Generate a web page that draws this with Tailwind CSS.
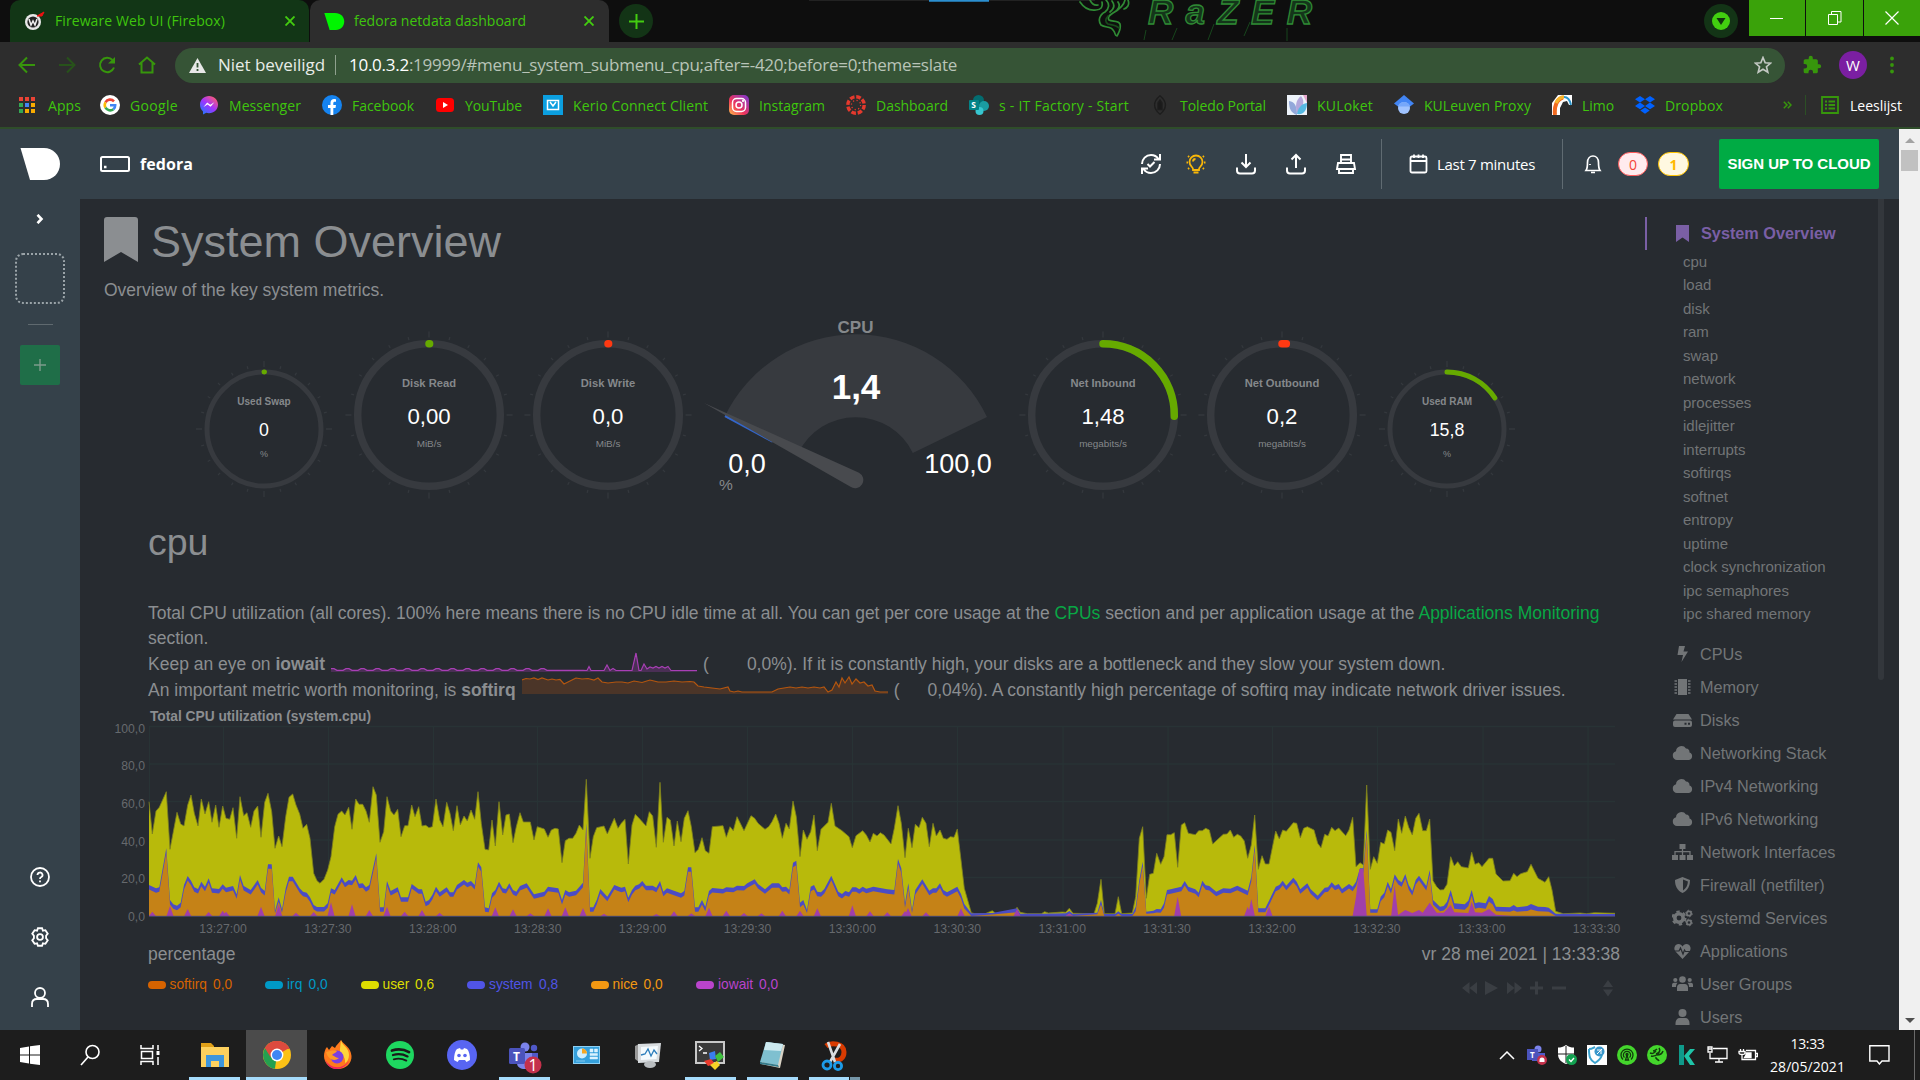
<!DOCTYPE html>
<html lang="nl">
<head>
<meta charset="utf-8">
<title>fedora netdata dashboard</title>
<script src="https://cdn.jsdelivr.net/npm/@tailwindcss/browser@4"></script>
</head>
<body class="w-[1920px] h-[1080px] overflow-hidden flex flex-col bg-[#272b30] font-['Liberation_Sans',Arial,sans-serif] text-[#8b8e91]">

<!-- Browser chrome -->
<div class="h-[129px] shrink-0 flex flex-col bg-[#2d2d2d] border-b-2 border-[#2f4d2a] font-['Open_Sans','Noto_Sans',sans-serif] text-[14px] text-[#3fc50d] whitespace-nowrap">
  <!-- Tab strip -->
  <div class="relative h-[42px] shrink-0 bg-[#0e0e0e] flex">
    <svg class="absolute left-0 top-0" width="1920" height="42" fill="none">
      <path d="M809 .5H1095" stroke="#222"/><path d="M929 .8h60" stroke="#2b8fd0" stroke-width="1.8"/>
      <g stroke="#2f8a34" stroke-width="1.7" stroke-linejoin="round" stroke-linecap="round">
        <path d="M1080 2c4 6 9 9 16 8 5 0 7-3 6-8M1090 0c2 4 4 6 8 5M1106 0c4 4 3 9-1 12-6 3-7 9-4 13 4 3 10 1 12 5 3 3 1 5 4 6 3-5 4-8 3-12-2-4-8-2-11-4-2-3 1-5 4-7 7-4 11-8 12-13M1112 1c3 4 2 8-2 11M1118 2c2 3 1 6-1 8M1124 9c3-1 6-4 4-9"/>
        <path d="M1108 16c-3 3-3 6 0 8 4 1 8 1 11 4" stroke="#174a1b"/>
      </g>
      <text x="1148" y="24" font-family="Liberation Sans" font-style="italic" font-weight="700" font-size="35" textLength="164" lengthAdjust="spacing" fill="#14351a" stroke="#2f8a34" stroke-width="1.3">RaZER</text>
      <path d="M1146 30l-2 10M1177 28l-5 12M1214 24l-6 16M1250 22l-6 14M1287 28v13" stroke="#17451c"/>
    </svg>
    <div class="relative ml-[10px] w-[299px] h-[42px] rounded-t-[10px] bg-[#123616] flex items-center pl-[14px]">
      <svg width="22" height="22" viewBox="0 0 22 22"><circle cx="9" cy="12" r="8" fill="#e8e8e8"/><circle cx="9" cy="12" r="5.6" fill="#222"/><path d="M5 9l2 6 2-4 2 4 2-6" stroke="#eee" stroke-width="1.5" fill="none"/><path d="M13 6l7-4-2 4z" fill="#e11" stroke="#e11"/></svg>
      <span class="ml-[9px] -mt-px" data-w="170">Fireware Web UI (Firebox)</span>
      <svg class="absolute left-[275px] top-[16px]" width="10" height="10"><path d="M.5.5l9 9m0-9l-9 9" stroke="#43cc10" stroke-width="1.9"/></svg>
    </div>
    <div class="relative ml-[1px] w-[299px] h-[42px] rounded-t-[10px] bg-[#2d2d2d] flex items-center pl-[14px]">
      <svg width="21" height="17" viewBox="0 0 42 35"><path d="M0 0h22C34 0 41 8 41 17.500S34 35 24 35H11z" fill="#00f500"/></svg>
      <span class="ml-[9px] -mt-px" data-w="172">fedora netdata dashboard</span>
      <svg class="absolute left-[274px] top-[16px]" width="10" height="10"><path d="M.5.5l9 9m0-9l-9 9" stroke="#43cc10" stroke-width="1.900"/></svg>
    </div>
    <div class="relative ml-[10px] mt-1 size-[34px] rounded-full bg-[#133416] flex items-center justify-center"><svg width="15" height="15"><path d="M7.500 0v15M0 7.500h15" stroke="#43cc10" stroke-width="2"/></svg></div>
    <div class="relative ml-auto mt-1 mr-[11px] size-[34px] rounded-full bg-[#133416] flex items-center justify-center"><svg width="18" height="18"><circle cx="9" cy="9" r="9" fill="#42cf10"/><path d="M4.500 6h9L9 13z" fill="#12340f"/></svg></div>
    <div class="relative h-9 w-[171px] flex gap-px">
      <div class="w-[56px] bg-[#3aa20a] flex items-center justify-center"><svg width="14" height="14"><path d="M0 7.500h13" stroke="#fff"/></svg></div>
      <div class="w-[57px] bg-[#3aa20a] flex items-center justify-center"><svg width="14" height="14" fill="none" stroke="#fff"><path d="M.5 3.500h9v10h-9zM3.500 3V.5h9.500v10.500H10"/></svg></div>
      <div class="w-[56px] bg-[#3aa20a] flex items-center justify-center"><svg width="14" height="14"><path d="M.5.5l13 13m0-13l-13 13" stroke="#fff" stroke-width="1.200"/></svg></div>
    </div>
  </div>
  <!-- Address row -->
  <div class="h-[46px] shrink-0 flex items-center pl-[17px] text-[#37960c]">
    <svg width="20" height="20" fill="none" stroke="currentColor" stroke-width="2"><path d="M18 10H3m7-7.500L2.500 10l7.500 7.500"/></svg>
    <svg class="ml-5 text-[#27521a]" width="20" height="20" fill="none" stroke="currentColor" stroke-width="2"><path d="M2 10h15m-7-7.500l7.500 7.500-7.500 7.500"/></svg>
    <svg class="ml-5" width="20" height="20" fill="none" stroke="currentColor" stroke-width="2"><path d="M17 12.500A7.200 7.200 0 1 1 15.500 5"/><path d="M11 8.500h7V2z" fill="currentColor" stroke="none"/></svg>
    <svg class="ml-5" width="20" height="20" fill="none" stroke="currentColor" stroke-width="2"><path d="M2 9.500L10 2.500l8 7M4.500 8v9.500h11V8"/></svg>
    <div class="ml-[18px] w-[1610px] h-[35px] rounded-full bg-[#365436] flex items-center text-[17px] text-[#b9c4b8]">
      <svg class="ml-[14px]" width="17" height="15"><path d="M8.500 0L17 15H0z" fill="#e8e8e8"/><path d="M8.500 5v4.500m0 1.500v2" stroke="#365436" stroke-width="1.800"/></svg>
      <span class="ml-3 text-[#e8ece8]" data-w="107">Niet beveiligd</span>
      <div class="ml-[10px] w-px h-5 bg-[#8fa18e]"></div>
      <span class="ml-[13px]" data-w="608"><span class="text-white">10.0.3.2</span>:19999/#menu_system_submenu_cpu;after=-420;before=0;theme=slate</span>
      <svg class="ml-auto mr-[13px]" width="18" height="18" viewBox="0 0 24 24" fill="none" stroke="#c4c9c4" stroke-width="2.200"><path d="M12 2l2.900 7 7.300.5-5.600 4.800 1.800 7.200L12 17.600l-6.400 3.900 1.800-7.200L1.800 9.500 9.100 9z"/></svg>
    </div>
    <svg class="ml-[17px]" width="20" height="20" viewBox="0 0 24 24" fill="currentColor"><path d="M20.500 11H19V7a2 2 0 0 0-2-2h-4V3.500a2.500 2.500 0 0 0-5 0V5H4a2 2 0 0 0-2 2v3.800h1.500a2.700 2.700 0 0 1 0 5.400H2V20a2 2 0 0 0 2 2h3.800v-1.500a2.700 2.700 0 0 1 5.400 0V22H17a2 2 0 0 0 2-2v-4h1.500a2.500 2.500 0 0 0 0-5z"/></svg>
    <div class="ml-[17px] size-7 rounded-full bg-[#7b1fa2] text-white text-[15px] flex items-center justify-center">W</div>
    <svg class="ml-[23px]" width="4" height="18" fill="currentColor"><circle cx="2" cy="2.500" r="1.900"/><circle cx="2" cy="9" r="1.900"/><circle cx="2" cy="15.500" r="1.900"/></svg>
  </div>
  <!-- Bookmarks -->
  <div class="h-[34px] shrink-0 flex items-center pl-[18px] gap-[21px]">
    <div class="flex items-center gap-[10px] -mr-[2px]"><svg width="20" height="20"><g><path d="M1 2h4v4H1zM7 2h4v4H7zM13 2h4v4h-4z" fill="#ea4335"/><path d="M1 8h4v4H1z" fill="#34a853"/><path d="M7 8h4v4H7z" fill="#4285f4"/><path d="M13 8h4v4h-4zM7 14h4v4H7zM13 14h4v4h-4z" fill="#f9ab00"/><path d="M1 14h4v4H1z" fill="#34a853"/></g></svg><span data-w="33">Apps</span></div>
    <div class="flex items-center gap-[10px]"><svg width="20" height="20" fill="none" stroke-width="2.600"><circle cx="10" cy="10" r="10" fill="#fff"/><path d="M14 6.300A5.300 5.300 0 0 0 5.500 7.300" stroke="#ea4335"/><path d="M5.500 7.300a5.300 5.300 0 0 0 0 5.400" stroke="#fbbc05"/><path d="M5.500 12.700a5.300 5.300 0 0 0 7.900 1.500" stroke="#34a853"/><path d="M13.400 14.200A5 5 0 0 0 15.200 10.200H10" stroke="#4285f4"/></svg><span data-w="48">Google</span></div>
    <div class="flex items-center gap-[10px]"><svg width="20" height="20"><defs><linearGradient id="ms" x1="0" y1="1" x2=".8" y2="0"><stop stop-color="#0a84ff"/><stop offset=".55" stop-color="#a033ff"/><stop offset="1" stop-color="#ff5c70"/></linearGradient></defs><path d="M10 1c5 0 9 3.700 9 8.600s-4 8.600-9 8.600c-1 0-1.900-.1-2.700-.4L4 19.500V16.500C2 14.900 1 12.400 1 9.600 1 4.700 5 1 10 1z" fill="url(#ms)"/><path d="M4.500 12l3.700-4.500 3 2.200 4.200-2.500-3.800 4.600-3-2.200z" fill="#fff"/></svg><span data-w="72">Messenger</span></div>
    <div class="flex items-center gap-[10px]"><svg width="20" height="20"><circle cx="10" cy="10" r="10" fill="#1583f0"/><path d="M8.500 20v-7H6v-3h2.500V7.800C8.500 5.300 10 4 12.200 4l1.800.2v2.500h-1.200c-1.200 0-1.500.7-1.500 1.500V10H14l-.5 3h-2.200v7z" fill="#fff"/></svg><span data-w="62">Facebook</span></div>
    <div class="flex items-center gap-[10px]"><svg width="20" height="20"><rect x="1" y="3" width="18" height="14" rx="3.500" fill="#f00"/><path d="M8 7l5 3-5 3z" fill="#fff"/></svg><span data-w="57">YouTube</span></div>
    <div class="flex items-center gap-[10px]"><svg width="20" height="20" fill="none"><path d="M0 0h20v20H0z" fill="#0b9fe0"/><path d="M4.500 5.500h11v9h-11zM7 7l3 4 3-4" stroke="#fff" stroke-width="1.500"/></svg><span data-w="135">Kerio Connect Client</span></div>
    <div class="flex items-center gap-[10px]"><svg width="20" height="20" fill="none" stroke="#fff" stroke-width="1.500"><defs><linearGradient id="ig" x1="0" y1="1" x2="1" y2="0"><stop stop-color="#fdc04c"/><stop offset=".4" stop-color="#f0355a"/><stop offset="1" stop-color="#7a38d8"/></linearGradient></defs><rect width="20" height="20" rx="5" fill="url(#ig)" stroke="none"/><rect x="3.500" y="3.500" width="13" height="13" rx="4"/><circle cx="10" cy="10" r="3"/><circle cx="14" cy="6" r=".4"/></svg><span data-w="66">Instagram</span></div>
    <div class="flex items-center gap-[10px]"><svg width="20" height="20" fill="none" stroke="#e4392d"><circle cx="10" cy="10" r="8.200" stroke-width="3.400" stroke-dasharray="4.640 1.800"/><circle cx="10" cy="10" r="4.600" stroke-width="1.300" stroke-dasharray="1.200 2.410"/></svg><span data-w="72">Dashboard</span></div>
    <div class="flex items-center gap-[10px]"><svg width="20" height="20"><circle cx="9.500" cy="5.500" r="5.500" fill="#036c70"/><circle cx="15" cy="11" r="5" fill="#1a9ba1"/><circle cx="10.500" cy="16" r="4" fill="#37c6d0"/><rect y="5" width="10" height="10" rx="1" fill="#038387"/><text x="2.300" y="13" font-size="8.500" font-weight="700" fill="#fff">S</text></svg><span data-w="130">s - IT Factory - Start</span></div>
    <div class="flex items-center gap-[10px]"><svg width="20" height="20" fill="none" stroke="#1d1d1d" stroke-width="1.400"><path d="M10 .7C6 4 4.600 7 4.600 10S6 16 10 19.300C14 16 15.400 13 15.400 10S14 4 10 .7z"/><path d="M8 14.500V8l2-3 2 3v6.500z" fill="#1a1a1a"/></svg><span data-w="86">Toledo Portal</span></div>
    <div class="flex items-center gap-[10px]"><svg width="20" height="20"><path d="M0 0h20v20H0z" fill="#edf3fa"/><path d="M2 6c6 1 8 5 8 14C4 18 2 14 2 6z" fill="#93a8da"/><path d="M14 1c4 5 3 11-4 17C8 10 9 5 14 1z" fill="#b3a7db"/><path d="M20 8c-6 1-9 5-10 11 6 1 10-3 10-11z" fill="#55b9e2"/><path d="M16 0h4v8z" fill="#e6a8cd"/></svg><span data-w="56">KULoket</span></div>
    <div class="flex items-center gap-[10px]"><svg width="20" height="20"><path d="M10 0l10 8.500-4 3H4l-4-3z" fill="#4285f4"/><circle cx="10" cy="13" r="6" fill="#a0c3ff"/><path d="M4 11.500C5 5.500 15 5.500 16 11.500z" fill="#76a7fa"/></svg><span data-w="107">KULeuven Proxy</span></div>
    <div class="flex items-center gap-[10px]"><svg width="20" height="20" fill="none"><path d="M0 20V8L6 0h14v10h-3l-2-4-4 1-3 6v7z" fill="#fff"/><path d="M3 20C2 11 5 4 11 2.500" stroke="#f26a1f" stroke-width="4"/><path d="M4 8c2-4 4-6 8-6" stroke="#f6b32b" stroke-width="3.500"/><path d="M12 2c4 0 6 3 7 8" stroke="#2a93c9" stroke-width="2"/></svg><span data-w="32">Limo</span></div>
    <div class="flex items-center gap-[10px]"><svg width="20" height="20" fill="#0061fe"><path d="M5 1l5 3.300-5 3.300L0 4.300zM15 1l5 3.300-5 3.300-5-3.300zM5 7.600l5 3.300-5 3.300-5-3.300zM15 7.600l5 3.300-5 3.300-5-3.300zM10 12.400l4.700 3.100L10 18.700l-4.700-3.200z"/></svg><span data-w="58">Dropbox</span></div>
    <div class="ml-auto flex items-center pr-[18px]">
      <svg width="9" height="8" fill="none" stroke="#37960c" stroke-width="1.500"><path d="M.8.8L4 4 .8 7.200M4.800.8L8 4 4.800 7.200"/></svg>
      <div class="ml-[13px] w-px h-5 bg-[#2c4f25]"></div>
      <svg class="ml-[15px]" width="18" height="18" fill="none" stroke="#37960c" stroke-width="1.800"><path d="M1 1h16v16H1zM4 5.500h2M7.500 5.500H14M4 9h2M7.500 9H14M4 12.500h2M7.500 12.500H14"/></svg>
      <span class="ml-[11px] text-white" data-w="52">Leeslijst</span>
    </div>
  </div>
</div>

<!-- Page -->
<div class="h-[901px] shrink-0 flex overflow-hidden">
  <!-- Left rail -->
  <div class="w-20 shrink-0 bg-[#35414a] flex flex-col items-center">
    <svg class="mt-[19px]" width="40" height="32" viewBox="0 0 40 32"><path d="M.5 0H24c9 0 16 7 16 16s-7 16-16 16H10z" fill="#fff"/></svg>
    <svg class="mt-[34px]" width="8" height="10" fill="none" stroke="#fff" stroke-width="2.600"><path d="M1.500.8L5.500 5 1.500 9.200"/></svg>
    <div class="mt-[29px] w-[50px] h-[51px] rounded-lg border-2 border-dotted border-[#9aa3a8]"></div>
    <div class="mt-5 w-[25px] h-px bg-[#5f696f]"></div>
    <div class="mt-5 size-10 rounded-[2px] bg-[#1f6e48] flex items-center justify-center"><svg width="12" height="12"><path d="M6 0v12M0 6h12" stroke="#7d9c8c" stroke-width="1.400"/></svg></div>
    <svg class="mt-[482px]" width="20" height="20" fill="none" stroke="#fff" stroke-width="1.800"><circle cx="10" cy="10" r="9"/><path d="M7.500 8a2.500 2.500 0 1 1 3.500 2.300c-.8.4-1 .8-1 1.700m0 1.500v1.800"/></svg>
    <svg class="mt-[40px]" width="20" height="20" viewBox="0 0 24 24" fill="none" stroke="#fff" stroke-width="2.200"><path d="M9.500 1.500h5l1 3 3-.7 2.800 4.200-2 2.500v3l2 2.500-2.800 4.200-3-.7-1 3h-5l-1-3-3 .7L2.700 16l2-2.500v-3l-2-2.500 2.800-4.200 3 .7z"/><circle cx="12" cy="12" r="3.500"/></svg>
    <svg class="mt-[40px]" width="20" height="20" fill="none" stroke="#fff" stroke-width="1.800"><circle cx="10" cy="6" r="5"/><path d="M2 20v-3c0-3 2-5 5-5h6c3 0 5 2 5 5v3"/></svg>
  </div>

  <div class="w-[1819px] shrink-0 flex flex-col">
    <!-- Top bar -->
    <header class="h-[70px] shrink-0 bg-[#35414a] flex items-center pl-5 pr-5 whitespace-nowrap font-['Open_Sans','Noto_Sans',sans-serif] text-white">
      <svg width="30" height="16" fill="none" stroke="#fff" stroke-width="2"><rect x="1" y="1" width="28" height="14" rx="1.500"/><path d="M4 11h2.500" stroke-width="2.500"/></svg>
      <span class="ml-[10px] text-[16px] font-bold" data-w="53">fedora</span>
      <svg class="ml-auto" width="24" height="24" fill="none" stroke="#fff" stroke-width="2"><path d="M3 12c0-5 4-9 9-9 3 0 5.500 1 7.500 4M21 2v5.500h-6M21 12c0 5-4 9-9 9-3 0-5.500-1-7.500-4M3 22v-5.500h6M8.500 12l2.500 2.500L15.500 10"/></svg>
      <svg class="ml-[21px]" width="24" height="24" fill="none" stroke="#f9b708" stroke-width="1.800"><path d="M9 17c0-2-3.500-3-3.500-7a6.500 6.500 0 0 1 13 0c0 4-3.500 5-3.500 7v1H9zM9.500 20.500h5M9 9.500C9 8 10 7 11.500 7M2.500 10.500h1.500M20 10.500h1.500M4 4l1.200 1M20 4l-1.200 1M4 17l1.200-1M20 17l-1.200-1"/></svg>
      <svg class="ml-[26px]" width="24" height="24" fill="none" stroke="#fff" stroke-width="2"><path d="M12 2v13M7.500 10.500L12 15l4.500-4.500M3 15.500v3c0 2 1 3 3 3h12c2 0 3-1 3-3v-3"/></svg>
      <svg class="ml-[26px]" width="24" height="24" fill="none" stroke="#fff" stroke-width="2"><path d="M12 16V3M7.500 7.500L12 3l4.500 4.500M3 15.500v3c0 2 1 3 3 3h12c2 0 3-1 3-3v-3"/></svg>
      <svg class="ml-[26px]" width="24" height="24" fill="none" stroke="#fff" stroke-width="1.900"><path d="M7 11V3h10v8M4 11h16l1 6H3zM5 17v4h14v-4M7 7.500h10"/></svg>
      <div class="ml-[23px] w-px h-[50px] bg-[#606b72]"></div>
      <svg class="ml-[24px]" width="24" height="24" fill="none" stroke="#fff" stroke-width="1.800"><rect x="4.500" y="4.500" width="16" height="16" rx="1.500"/><path d="M4.500 9h16M8 2.500v3.500M12.500 2.500v3.500M17 2.500v3.500"/></svg>
      <span class="ml-[7px] text-[15px]" data-w="98">Last 7 minutes</span>
      <div class="ml-[27px] w-px h-[50px] bg-[#606b72]"></div>
      <svg class="ml-[18px]" width="24" height="24" fill="none" stroke="#fff" stroke-width="1.700"><path d="M5 18.500h14c-1-1.500-1.500-3-1.500-8C17.500 6.500 15 4 12 4s-5.500 2.500-5.500 6.500c0 5-.5 6.500-1.500 8zM10 20.500h4M9 13v-1"/></svg>
      <div class="ml-[13px] w-[30px] h-6 rounded-full border-[1.500px] border-[#ff5b5b] bg-[#ffebee] text-[#f44336] text-[14px] flex items-center justify-center">0</div>
      <div class="ml-[10px] w-[31px] h-6 rounded-full border-[1.500px] border-[#ffc300] bg-[#fff8e1] text-[#ffb800] text-[14px] font-bold flex items-center justify-center">1</div>
      <div class="ml-[30px] w-[160px] h-[50px] rounded-[2px] bg-[#00ab44] flex items-center justify-center font-['Liberation_Sans',Arial,sans-serif] font-bold text-[15px]"><span data-w="143">SIGN UP TO CLOUD</span></div>
    </header>

    <div class="h-[831px] flex">
      <!-- Charts -->
      <main class="w-[1560px] shrink-0 whitespace-nowrap">
        <h1 class="mt-[18px] ml-6 h-[49px] flex items-center text-[45px] leading-[49px]">
          <svg class="-mt-1" width="34" height="45" viewBox="0 0 34 45"><path d="M3 0h28a3 3 0 0 1 3 3v42L17 35 0 45V3a3 3 0 0 1 3-3z" fill="#8b8e91"/></svg>
          <span class="ml-[13px]">System Overview</span>
        </h1>
        <p class="mt-[12px] ml-6 h-[25px] leading-[25px] text-[17.500px]">Overview of the key system metrics.</p>
        <div id="gauges" class="mt-[15px] ml-[112px] h-[183px] flex items-end gap-[7px]"></div>
        <h2 class="mt-[21px] ml-[68px] h-10 leading-10 text-[37.500px]">cpu</h2>
        <div class="mt-[39px] ml-[68px] h-[106px] text-[17.500px] leading-[25px]">
          <div class="h-[25px]">Total CPU utilization (all cores). 100% here means there is no CPU idle time at all. You can get per core usage at the <span class="text-[#09a745]">CPUs</span> section and per application usage at the <span class="text-[#09a745]">Applications Monitoring</span></div>
          <div class="h-[26px]">section.</div>
          <div class="h-[26px] flex"><span>Keep an eye on <b>iowait</b></span><svg id="spark-iowait" class="ml-[6px] shrink-0" width="366" height="22"></svg><span class="ml-[6px]">(</span><span class="ml-[38px]">0,0%). If it is constantly high, your disks are a bottleneck and they slow your system down.</span></div>
          <div class="h-[26px] flex"><span>An important metric worth monitoring, is <b>softirq</b></span><svg id="spark-softirq" class="ml-[6px] -mt-1 shrink-0" width="366" height="22"></svg><span class="ml-[6px]">(</span><span class="ml-[28px]">0,04%). A constantly high percentage of softirq may indicate network driver issues.</span></div>
        </div>
        <svg id="chart" class="-mt-px block" width="1560" height="236" viewBox="80 706 1560 236"></svg>
        <div class="h-6 pl-[68px] pr-5 flex justify-between text-[17.500px] leading-6"><span>percentage</span><span>vr 28 mei 2021 | 13:33:38</span></div>
        <div class="mt-[8px] h-[22px] pl-[68px] flex items-center text-[13.750px]" id="legend"></div>
        <svg class="-mt-[17px] ml-[1375px]" width="170" height="18" fill="#3a3e43"><path d="M14.500 3v12L7 9zM22 3v12l-7.500-6zM30 2l13 7-13 7zM52 3v12l7.500-6zM59.500 3v12L67 9z"/><path d="M75 9h13M81.500 2.500v13M97 9h14" stroke="#3a3e43" stroke-width="3"/><path d="M148 8l5-7 5 7zM148 10.500l5 7 5-7z"/></svg>
      </main>
      <!-- Section menu -->
      <nav class="relative w-[259px] shrink-0 pt-[18px] text-[#727577]">
        <div class="absolute left-[238px] top-0 w-[6px] h-[481px] rounded-b bg-[#33373c]"></div>
        <div class="ml-[5px] h-[33px] border-l-2 border-[#7a5fa5] flex items-center text-[#7a5fa5] text-[16.250px] font-bold whitespace-nowrap">
          <svg class="ml-[29px]" width="13" height="17"><path d="M0 0h13v17l-6.500-4.500L0 17z" fill="currentColor"/></svg><span class="ml-3">System Overview</span>
        </div>
        <div id="sub" class="ml-[43px] text-[15px] leading-[23.470px]"></div>
        <div id="menu" class="mt-[12px] ml-[32px] text-[16.250px] leading-[33px]"></div>
      </nav>
    </div>
  </div>

  <!-- Browser scrollbar -->
  <div class="w-[21px] shrink-0 bg-[#f0f0f0] flex flex-col items-center">
    <svg class="mt-[9px]" width="10" height="5"><path d="M0 5l5-5 5 5z" fill="#a3a3a3"/></svg>
    <div class="mt-[7px] w-[17px] h-[21px] bg-[#c1c1c1]"></div>
    <svg class="mt-auto mb-[7px]" width="10" height="5"><path d="M0 0l5 5 5-5z" fill="#505050"/></svg>
  </div>
</div>

<!-- Taskbar -->
<div class="h-[50px] shrink-0 bg-[#1d1d1d] flex items-stretch font-['Open_Sans','Noto_Sans',sans-serif] text-white">
  <div class="w-[60px] grid place-items-center"><svg width="20" height="20" fill="#fff"><path d="M0 3l9-1.500v8H0zM10 1.300L20 0v9.500H10zM0 10.500h9v8L0 17zM10 10.500h10V20l-10-1.300z"/></svg></div>
  <div class="w-[60px] grid place-items-center"><svg width="22" height="22" fill="none" stroke="#fff" stroke-width="1.600"><circle cx="13.500" cy="8" r="6.500"/><path d="M9 13l-7 8"/></svg></div>
  <div class="w-[63px] pr-[3px] grid place-items-center"><svg width="22" height="20" fill="none" stroke="#fff" stroke-width="1.500"><path d="M2 0v3.500h12V0M2 20v-3.500h12V20M2.500 6.500h11v7h-11zM19 0v5M19 12v8"/><path d="M17.500 6h3v4h-3z" fill="#fff" stroke="none"/></svg></div>
  <div class="w-[63px] flex flex-col items-center justify-end gap-[10px]"><svg width="28" height="24"><path d="M0 0h10l3 3v4H0z" fill="#e0a018"/><path d="M0 4h28v20H0z" fill="#fdd15e"/><path d="M5 24V12h18v12h-5v-6h-8v6z" fill="#3e96dc"/></svg><div class="w-[51px] h-[3px] bg-[#a5dbfb]"></div></div>
  <div class="w-[61px] flex flex-col items-center justify-end gap-[8px] bg-[#4b4b4b]"><svg width="28" height="28"><circle cx="14" cy="14" r="14" fill="#fbc116"/><path d="M14 14L2 7A14 14 0 0 1 26.200 7z" fill="#dd4b3e"/><path d="M14 14L1.900 7a14 14 0 0 0 10 20.800z" fill="#24a050"/><path d="M14 8h12.700a14 14 0 0 0-24.800-1l5.500 9z" fill="#dd4b3e"/><circle cx="14" cy="14" r="6.400" fill="#fff"/><circle cx="14" cy="14" r="5" fill="#3f86f4"/></svg><div class="w-[61px] h-[3px] bg-[#a5dbfb]"></div></div>
  <div class="w-[62px] grid place-items-center"><svg width="30" height="30"><path d="M15 29C7 29 1 23 1 16c0-3 1-7 3-9l2 3 3-4 3 2C13 5 17 2 18 0c2 4 10 7 10.500 16C29 23 23 29 15 29z" fill="#ff7a1c"/><path d="M18 0c1 6 8 7 8 15 0 4-2 7-4 8 1-8-6-8-5-14z" fill="#ffd43a"/><circle cx="14" cy="17" r="6.500" fill="#7b3fe0"/><path d="M3 12c2 8 9 10 13 6-3 0-4-2-7-3 2-2 4-2 5-4-4-1-7 0-11 1z" fill="#ff9a25"/><path d="M2 19c4 9 16 12 24 2-4 9-20 13-24-2z" fill="#f0245e"/></svg></div>
  <div class="w-[62px] grid place-items-center"><svg width="28" height="28" fill="none" stroke="#1a1a1a" stroke-linecap="round"><circle cx="14" cy="14" r="14" fill="#1ed760" stroke="none"/><path d="M6 9.500c6-1.800 12-1.200 17 1.600" stroke-width="2.800"/><path d="M7 14c5-1.500 10-1 14.500 1.400" stroke-width="2.300"/><path d="M7.800 18.300c4-1.200 8.500-.8 12.500 1.300" stroke-width="1.900"/></svg></div>
  <div class="w-[62px] grid place-items-center"><svg width="30" height="30"><circle cx="15" cy="15" r="15" fill="#5865f2"/><path d="M7 20c0-5 1-9 3-11l3-1 .8 1.500h2.400L17 8l3 1c2 2 3 6 3 11l-3.500 2-1.500-2h-6l-1.500 2z" fill="#fff"/><circle cx="12" cy="15.500" r="1.800" fill="#5865f2"/><circle cx="18" cy="15.500" r="1.800" fill="#5865f2"/></svg></div>
  <div class="w-[62px] flex flex-col items-center justify-end gap-[4px]"><svg class="overflow-visible" width="30" height="31"><circle cx="16" cy="5" r="4.500" fill="#7b83eb"/><circle cx="25" cy="6" r="3.200" fill="#5059c9"/><path d="M20 11h9v9c0 4-9 4-9 0z" fill="#5059c9"/><path d="M8 11h15v10c0 8-15 8-15 0z" fill="#7b83eb"/><rect x="0" y="6" width="16" height="16" rx="1.500" fill="#4b53bc"/><text x="4" y="18.500" font-size="12" font-weight="700" fill="#fff">T</text><circle cx="24" cy="23" r="8.500" fill="#c4314b"/><text x="19.500" y="29" font-size="16" fill="#fff">1</text></svg><div class="w-[51px] h-[3px] bg-[#a5dbfb]"></div></div>
  <div class="w-[62px] grid place-items-center"><svg width="27" height="20"><path d="M0 1h27v18H0z" fill="#8ed0f3"/><path d="M1 2h25v16H1z" fill="#35a0dc"/><circle cx="9" cy="8.500" r="5" fill="#cfeeff"/><path d="M9 8.500V3.500a5 5 0 0 1 5 5z" fill="#f5a623"/><path d="M17 4h3v3h-3zM21.500 4h3v3h-3zM17 8.500h7.500v2H17zM17 12h7.500v2H17zM3 16h9" fill="#d9f2ff" stroke="#d9f2ff" stroke-width=".5"/></svg></div>
  <div class="w-[62px] grid place-items-center"><svg width="28" height="28"><path d="M1 5l4-2v18l-4-3z" fill="#999"/><path d="M4 3l23-1-2 19-21 1z" fill="#d8dcdf"/><path d="M7 6l17-1-1.500 13L7 19z" fill="#f4fafd"/><path d="M7 14l4-1 3-5 3 7 3-6 3 4" stroke="#2b7dbb" stroke-width="1.300" fill="none"/><ellipse cx="16" cy="23.500" rx="6" ry="3.500" fill="#b9bdc0"/></svg></div>
  <div class="w-[62px] flex flex-col items-center justify-end gap-[6px]"><svg width="30" height="30"><path d="M1 1h28v21H1z" fill="#3a3a3a" stroke="#c8c8c8" stroke-width="2"/><path d="M4 5l3 2.500-3 2.500M8 12h4" stroke="#fff" stroke-width="1.300" fill="none"/><path d="M14 12l6-2 1 8-6 1z" fill="#3a7ff0"/><path d="M20 15l5-4 4 5-6 5z" fill="#3fc13f"/><path d="M9 20l7-2 4 5-7 2z" fill="#ea3a2c"/><path d="M15 24l7-4 3 4-5 5z" fill="#f5d327"/></svg><div class="w-[51px] h-[3px] bg-[#a5dbfb]"></div></div>
  <div class="w-[62px] flex flex-col items-center justify-end gap-[8px]"><svg width="28" height="28"><path d="M9 1l18 3-5 23-19-4z" fill="#d9d3c5"/><path d="M8 1l17 2-5 21-18-3z" fill="#7fc0d0"/><path d="M8 1l17 2-2 7-17-1z" fill="#cdeaf0"/><path d="M2 21l18 3 1 2-19-3z" fill="#337b8c"/></svg><div class="w-[51px] h-[3px] bg-[#a5dbfb]"></div></div>
  <div class="w-[62px] flex flex-col items-center justify-end gap-[6px]"><svg width="28" height="30" fill="none"><path d="M6 5c5-4 18-3 18 6 0 7-5 9-10 8" stroke="#d83b01" stroke-width="5"/><path d="M8 1l7 20M20 3L10 21" stroke="#d9dde0" stroke-width="2.600"/><circle cx="7" cy="24" r="4" stroke="#1d9be8" stroke-width="2.800"/><circle cx="18" cy="25" r="3.600" stroke="#1d9be8" stroke-width="2.800"/></svg><div class="flex"><div class="w-[40px] h-[3px] bg-[#a5dbfb]"></div><div class="ml-px w-[10px] h-[3px] bg-[#7596a8]"></div></div></div>
  <div class="ml-auto flex items-center">
    <div class="w-[30px] grid place-items-center"><svg width="16" height="9" fill="none" stroke="#fff" stroke-width="1.500"><path d="M1 8l7-7 7 7"/></svg></div>
    <div class="w-[30px] grid place-items-center"><svg width="20" height="20"><circle cx="11" cy="4" r="3.500" fill="#7b83eb"/><path d="M5 8h13v8H5z" fill="#5059c9"/><rect y="4" width="11" height="11" fill="#4b53bc"/><text x="3" y="12.500" font-size="8" font-weight="700" fill="#fff">T</text><circle cx="15" cy="15" r="5" fill="#c4314b"/><path d="M12.500 15a2.500 2.500 0 1 1 5 0v2h-5z" fill="#fff"/></svg></div>
    <div class="w-[30px] grid place-items-center"><svg width="20" height="20"><path d="M9 0c3 2 5 2.500 8 2.500V9c0 5-3 8-8 10-5-2-8-5-8-10V2.500C4 2.500 6 2 9 0z" fill="#fff"/><path d="M9 1v17M1 9h16" stroke="#1d1d1d"/><circle cx="14.500" cy="14.500" r="5.500" fill="#12a150"/><path d="M12 14.500l2 2 3-3.500" stroke="#fff" stroke-width="1.300" fill="none"/></svg></div>
    <div class="w-[30px] grid place-items-center"><svg width="20" height="20" fill="none"><path d="M0 0h20v20H0z" fill="#fff"/><path d="M2 4c3 0 4-1 6-2M2 4c0 8 1 11 6 14 5-3 6-5 7-8" stroke="#3ba3cf" stroke-width="2"/><circle cx="12.500" cy="6.500" r="5" fill="#3a97cb"/><path d="M10 9l5-5M10 5h4v4" stroke="#fff"/></svg></div>
    <div class="w-[30px] grid place-items-center"><svg width="20" height="20" fill="none" stroke="#123a0d" stroke-width="1.300"><circle cx="10" cy="10" r="10" fill="#44d62c" stroke="none"/><path d="M6 14.500a6 6 0 1 1 8 0M7.500 12.500a3.600 3.600 0 1 1 5 0M8.500 15l1.500-5 1.500 5z"/><circle cx="10" cy="9.500" r="1"/></svg></div>
    <div class="w-[30px] grid place-items-center"><svg width="20" height="20" fill="none" stroke="#123a0d" stroke-width="1.500"><circle cx="10" cy="10" r="10" fill="#44d62c" stroke="none"/><path d="M3 8c3 1 4 0 6-2M4 11c4 1 6-1 8-3M9 12c-1 2 2 2 3 4M12 3c2 3 0 5-3 6M10 10c3 0 5-1 6-4M6 6c2 0 3-1 4-2"/></svg></div>
    <div class="w-[30px] grid place-items-center"><svg width="18" height="20"><path d="M1 0h5v20H1z" fill="#0f9a8a"/><path d="M6 11L12 4h5l-6 7 6 9h-5z" fill="#1fc4a8"/></svg></div>
    <div class="w-[30px] grid place-items-center"><svg width="21" height="18" fill="none" stroke="#fff" stroke-width="1.300"><path d="M6 2.500h14v10H3V7M8 16h8M12 12.500V16M1 1h4v5H1zM1 3h4"/></svg></div>
    <div class="w-[31px] grid place-items-center"><svg width="20" height="14" fill="none" stroke="#fff" stroke-width="1.300"><path d="M8 2.500h9.500v9H4V8M18 5.500h1.500v3H18M1 3.500h6V5c0 2-6 2-6 0zM2.500 1v2M5.500 1v2M4 7v3"/><path d="M8 5h5v4.500H6.500L8 7z" fill="#fff"/></svg></div>
    <div class="w-[89px] flex flex-col items-center text-[14px] leading-[23px]"><span data-w="34">13:33</span><span data-w="75">28/05/2021</span></div>
    <div class="w-[54px] grid place-items-center"><svg width="21" height="20" fill="none" stroke="#fff" stroke-width="1.400"><path d="M.8.800H20V16h-7l-2.600 3L8 16H.8z"/></svg></div>
    <div class="ml-[8px] mr-[5px] w-px h-[50px] bg-[#6a6a6a]"></div>
  </div>
</div>

<script>
const $ = id => document.getElementById(id);
const polar = (r, deg) => { const a = (deg - 90) * Math.PI / 180; return [(r * Math.cos(a)).toFixed(2), (r * Math.sin(a)).toFixed(2)].join(' '); };

// Round gauges
function pie(size, radius, width, title, value, unit, fs, sweep, color) {
  const h = size / 2; let ticks = '';
  for (let i = 0; i < 24; i++) {
    const major = i % 6 === 0, r = radius + width / 2;
    ticks += `M${polar(r + 2.500, i * 15)}L${polar(r + (major ? 8.500 : 5.500), i * 15)}`;
  }
  return `<svg width="${size}" height="${size}" viewBox="${-h} ${-h} ${size} ${size}" fill="none" text-anchor="middle" class="shrink-0">
    <path d="${ticks}" stroke="#34383d" stroke-width="1.300"/><circle r="${radius}" stroke="#373a3f" stroke-width="${width}"/>
    <path d="M${polar(radius, 0)}A${radius} ${radius} 0 0 1 ${polar(radius, sweep)}" stroke="${color}" stroke-width="${width}" stroke-linecap="round"/>
    <text y="${fs[3]}" font-size="${fs[0]}" font-weight="700" fill="#85888b">${title}</text>
    <text y="${fs[4]}" font-size="${fs[1]}" fill="#fff">${value}</text><text y="${fs[5]}" font-size="${fs[2]}" fill="#85888b">${unit}</text></svg>`;
}
const S = [10, 17.800, 9, -24.500, 7, 28], L = [11.200, 22.200, 9.900, -28.500, 8.800, 32.300];
const G = '#66aa00', R = '#ff3912';
$('gauges').innerHTML =
  pie(144, 57, 5, 'Used Swap', '0', '%', S, .5, G) +
  pie(172, 71.300, 7.500, 'Disk Read', '0,00', 'MiB/s', L, .5, G) +
  pie(172, 71.300, 7.500, 'Disk Write', '0,0', 'MiB/s', L, .5, R) +
  `<svg width="309" height="183" viewBox="701.500 318 309 183" text-anchor="middle" class="shrink-0 overflow-visible">
    <path d="M725 417A145.500 145.500 0 0 1 987.500 417L913.300 453A63.500 63.500 0 0 0 799 453Z" fill="#373a3f"/>
    <path d="M725 417l1.500-3 48 27-2 1.500z" fill="#3366cc"/>
    <path d="M704.500 403L859.500 472.700A8.200 8.200 0 1 1 851 486.700Z" fill="#484a4e"/>
    <text x="856" y="333" font-size="17" font-weight="700" fill="#85888b">CPU</text>
    <text x="856.500" y="398.500" font-size="35" font-weight="700" fill="#fff">1,4</text>
    <text x="747.500" y="472.500" font-size="27" fill="#fff">0,0</text><text x="958.500" y="472.500" font-size="27" fill="#fff">100,0</text>
    <text x="726.500" y="490" font-size="15.500" fill="#85888b">%</text></svg>` +
  pie(172, 71.300, 7.500, 'Net Inbound', '1,48', 'megabits/s', L, 91, G) +
  pie(172, 71.300, 7.500, 'Net Outbound', '0,2', 'megabits/s', L, 3.500, R) +
  pie(144, 57, 5, 'Used RAM', '15,8', '%', S, 57, G);

// Stacked area chart; samples are stored in thirds of a pixel, in three runs
const OFF = [130, 640, 1130];
const pts = runs => runs.flatMap((s, i) => s.trim().split(/\s+/).map(p => { const [x, y] = p.split(',').map(Number); return [OFF[i] + x / 3, 710 + y / 3]; }));
const user = pts([
 '57,275 67,372 78,303 88,292 109,245 120,418 141,307 152,342 162,348 173,285 183,255 193,310 204,348 214,267 225,312 236,275 246,337 257,285 267,352 278,288 288,325 299,328 309,293 320,385 330,260 341,317 351,308 362,352 372,303 383,288 393,382 404,277 414,250 425,305 435,415 446,378 456,410 467,320 477,262 488,252 498,285 509,312 519,355 530,343 540,385 551,490 561,512 570,520 582,508 593,480 603,440 614,350 624,313 635,303 645,315 656,292 666,358 677,267 687,283 698,283 708,303 718,337 729,230 739,255 750,397 761,365 771,260 782,303 792,315 803,298 813,380 824,347 834,347 845,285 855,320 866,290 876,348 887,346 897,353 907,350 918,267 929,330 939,350 950,277 960,310 970,362 981,287 991,345 1002,318 1012,333 1023,300 1034,328 1044,245 1054,340 1065,418 1076,420 1086,330 1096,408 1107,275 1118,375 1128,315 1138,312 1149,398 1159,350 1170,308 1180,336 1201,336 1212,390 1222,350 1243,357 1254,382 1264,360 1275,355 1285,357 1296,458 1306,392 1317,385 1328,385 1338,370 1348,345 1359,360 1369,208 1380,445 1390,380 1400,353 1422,348 1432,372 1453,325 1464,355 1474,340 1485,328 1495,462 1506,345 1516,313',
 '0,328 18,348 28,305 38,318 49,412 60,217 70,397 81,322 91,330 102,408 112,333 123,395 133,325 144,302 154,350 165,428 175,418 186,383 196,422 207,430 217,350 249,347 259,382 270,350 280,362 291,320 312,362 333,317 344,325 354,340 375,358 386,350 396,335 407,312 417,340 427,385 438,340 448,357 459,273 469,320 480,440 490,360 501,388 512,365 522,315 532,422 543,358 564,337 574,280 585,348 606,362 627,380 637,413 648,377 668,362 679,375 690,396 700,370 711,378 721,368 732,375 753,402 763,355 774,287 784,340 795,443 805,355 816,413 826,343 837,353 847,322 858,340 868,410 879,340 889,378 900,360 910,385 921,388 931,380 942,382 952,357 963,450 973,535 994,608 1004,611 1035,611 1057,602 1067,610 1120,611 1131,592 1141,607 1162,611 1204,611 1214,605 1225,609 1267,606 1277,607 1288,595 1299,610 1362,611 1372,580 1383,508 1393,611 1425,611 1435,560 1445,611',
 '7,609 17,560 28,385 38,350 49,565 59,493 70,490 80,430 92,463 102,440 111,374 122,374 133,368 143,472 154,345 164,338 175,370 196,374 206,362 217,362 227,355 238,360 248,402 280,373 291,372 301,360 311,382 322,373 332,378 343,393 353,445 364,405 374,315 385,478 396,437 406,462 417,462 437,363 448,387 458,360 469,364 490,338 500,340 511,383 521,355 532,350 552,360 563,400 573,413 584,373 594,378 605,352 615,362 626,354 647,377 657,360 668,322 678,470 690,458 700,465 710,225 721,478 731,440 742,460 752,397 763,402 773,360 783,367 794,422 805,327 815,370 826,318 836,352 847,375 857,325 867,310 878,362 889,362 899,327 909,512 920,530 930,540 941,539 951,523 962,440 973,468 983,455 994,470 1015,474 1025,427 1035,463 1046,458 1056,470 1077,445 1088,445 1098,492 1119,513 1140,512 1151,490 1161,500 1172,491 1192,485 1203,463 1224,505 1245,517 1256,500 1266,540 1277,604 1300,611 1351,609 1370,611 1393,608 1455,610']);
const system = pts([
 '57,525 78,535 88,532 109,415 120,570 130,583 141,587 152,578 162,525 173,498 183,512 193,532 204,537 214,515 225,530 236,505 246,535 267,537 278,523 288,533 309,528 320,553 330,495 341,528 362,540 383,510 393,533 404,543 414,463 425,463 435,602 446,562 456,598 467,535 477,500 488,500 509,535 519,545 530,548 540,562 551,585 561,591 582,591 593,580 603,535 614,540 635,502 645,518 656,510 666,512 677,495 687,521 698,520 708,532 718,525 739,430 750,592 761,592 771,513 782,543 803,532 813,562 834,562 845,522 866,538 876,538 887,575 897,570 907,555 918,530 929,547 950,532 960,547 970,547 981,525 1002,510 1012,518 1023,513 1034,525 1044,457 1054,472 1065,592 1076,595 1086,550 1096,540 1107,515 1118,535 1128,537 1138,520 1149,540 1159,545 1170,528 1190,520 1212,553 1243,545 1254,530 1285,535 1296,570 1306,540 1317,547 1338,542 1359,518 1369,340 1380,592 1390,592 1400,570 1411,537 1432,560 1453,525 1474,533 1485,530 1495,563 1506,540 1516,527 1527,523',
 '7,513 18,527 38,527 49,533 60,513 70,545 81,535 123,550 133,543 144,472 154,472 165,592 175,592 186,570 196,590 207,543 217,534 249,537 259,532 280,533 291,527 312,528 322,520 344,508 354,522 375,538 396,520 417,520 427,532 438,530 448,540 459,458 469,452 480,578 490,570 501,600 512,530 522,525 532,545 543,547 553,537 574,497 595,545 606,552 616,543 627,547 637,532 648,532 658,538 668,530 679,536 690,533 700,530 742,538 763,540 774,447 784,475 795,580 805,520 816,600 826,540 847,508 868,542 879,535 889,535 900,520 910,540 921,547 952,530 963,552 973,582 994,610 1057,609 1131,595 1141,611 1204,611 1277,610 1288,603 1299,612 1372,608 1383,570 1393,612 1425,612 1435,604 1445,612',
 '7,612 17,590 28,510 38,455 49,605 70,602 80,597 92,598 102,580 111,540 122,538 154,530 164,513 175,530 196,538 206,548 217,512 227,526 238,528 259,545 280,535 301,536 322,527 353,542 364,500 374,405 385,595 406,595 417,572 437,530 448,525 458,512 469,527 490,503 500,515 511,538 532,520 542,538 563,557 584,533 594,532 605,517 615,527 626,522 636,537 657,522 668,530 678,515 690,475 700,475 710,360 721,598 742,598 752,560 763,548 773,515 783,537 794,493 805,510 815,517 826,492 836,525 847,543 857,510 867,497 889,528 899,480 909,570 930,590 941,588 951,575 962,540 973,580 1004,583 1015,572 1025,540 1035,580 1046,577 1067,580 1077,558 1088,567 1098,590 1140,592 1151,585 1161,592 1192,588 1203,582 1224,590 1245,591 1256,593 1277,611 1455,612']);
const BASE = 916;
const nice = system.map(([x, y]) => { const h = BASE - y; return [x, y + (h < 3 ? h : Math.min(x > 1445 ? 5.500 : 4.500, h * .5))]; });
const peaks = ['67,605 120,588 173,597 236,606 278,602 288,605 393,590 446,583 498,608 551,606 603,577 666,583 718,600 771,590 824,605 876,600 929,608 1096,592 1149,598 1201,610 1254,595 1306,592 1359,594 1422,611',
 '49,612 102,604 154,610 207,593 259,602 312,609 364,610 427,602 480,602 532,595 637,586 690,604 742,607 795,603 804,594 858,607 963,595 1131,597 1288,611',
 '143,560 353,590 364,567 417,588 794,525'];
const wait = pts(peaks).map(([x, y]) => `M${x - 3.500} ${BASE}L${x} ${y}L${x + 3.500} ${BASE}Z`).join('');
const wait2 = '668,617 678,560 688,477 700,477 710,617 804,617 805,614 826,600 847,609 867,600 878,608 899,578 920,608 941,608 962,585 973,607 1015,609 1025,575 1035,607 1056,608 1077,597 1098,614 1140,617'.split(' ').map(p => { const [x, y] = p.split(','); return [1130 + x / 3, 710 + y / 3]; });
const area = a => `M${a[0][0]} ${BASE}L${a.map(p => p[0].toFixed(1) + ' ' + p[1].toFixed(1)).join('L')}L${a[a.length - 1][0]} ${BASE}Z`;
const line = a => 'M' + a.map(p => p[0].toFixed(1) + ' ' + p[1].toFixed(1)).join('L');
const gx = [149.500, 223.500, 328.500, 433.500, 537.500, 642.500, 747.500, 852.500, 957.500, 1063, 1168, 1272.500, 1377.500, 1483, 1588];
const gy = [726.500, 764, 801.500, 840, 877.500];
let c = `<path d="${gx.map(x => `M${x} 726V916`).join('')}${gy.map(y => `M149 ${y}H1615`).join('')}" stroke="#283335" stroke-width="1.300"/>`;
c += `<path d="${area(user)}" fill="#b8ba0b"/><path d="${line(user)}" fill="none" stroke="#7d8020" stroke-width=".8"/>`;
c += `<path d="${area(system)}" fill="#4b4cc4"/><path d="${area(nice)}" fill="#c58217"/><path d="${wait}${area(wait2)}" fill="#a03fab"/>`;
c += `<path d="M149 916.300H1615" stroke="#4a4a70" stroke-width="1"/>`;
c += `<text x="150" y="721" font-size="13.750" font-weight="700" fill="#8b8e91" textLength="221">Total CPU utilization (system.cpu)</text><g font-size="12.200" fill="#66696d">`;
['100,0', '80,0', '60,0', '40,0', '20,0', '0,0'].forEach((t, i) => c += `<text x="145" y="${732.500 + i * 37.700}" text-anchor="end">${t}</text>`);
['13:27:00', '13:27:30', '13:28:00', '13:28:30', '13:29:00', '13:29:30', '13:30:00', '13:30:30', '13:31:00', '13:31:30', '13:32:00', '13:32:30', '13:33:00'].forEach((t, i) => c += `<text x="${223 + i * 104.900}" y="932.500" text-anchor="middle">${t}</text>`);
c += '<text x="1596.500" y="932.500" text-anchor="middle">13:33:30</text></g>';
$('chart').innerHTML = c;

// Sparklines
const spark = (id, p, col, fill) => { $(id).innerHTML = `<path d="M0 20L${p}L366 20Z" fill="${fill}"/><path d="M${p}" fill="none" stroke="${col}" stroke-width="1.200"/>`; };
let io = []; for (let x = 0; x < 255; x += 3) io.push(x + ' ' + (18.500 - ((x * 7) % 5 < 2 && x < 222 ? 1.800 : .2)));
spark('spark-iowait', io.join('L') + 'L256 18.500L258 14.500L260 18.500L273 18.500L276 13L279 18.500L282 16.500L285 18.500L301 18.500L305 1L308 18.500L310 18.500L313 12L316 17L319 15L322 16L325 14.500L328 16L331 14.500L334 16L337 14.500L340 18.500L366 18.500', '#a83fb5', '#4a2f55');
spark('spark-softirq', '0 6L4 4.500L8 5L12 4L16 5.500L20 4L26 6L30 5L34 6L38 5.500L42 10L46 8L50 6L54 4L60 5L66 4.500L72 6L76 4L80 8L86 9L94 8L100 8L106 9L112 7L120 8.500L128 6L136 8L144 8L152 7L160 8L168 7.500L172 8L176 12L182 13L190 14L198 15L206 13L208 17L212 18L216 17L220 18L250 18L256 15L262 14L268 13L274 14L280 13L286 14L292 13L298 14L302 13L306 18L310 16L314 8L317 13L320 4L323 9L327 3L330 10L334 5L338 9L342 8L346 12L350 11L353 17L358 18L366 18', '#b4560f', '#4b3528');

// Legend: swatch, name and value columns
const lg = [['softirq', '0,0', '#d66300', 148, 169.500, 213], ['irq', '0,0', '#0099c6', 265, 287, 308.500], ['user', '0,6', '#dddd00', 361, 382.500, 415], ['system', '0,8', '#5054e6', 467, 489, 539], ['nice', '0,0', '#f29812', 591, 612.500, 643.500], ['iowait', '0,0', '#b944cc', 696, 718, 759], ['', '', '', 800]];
$('legend').innerHTML = lg.slice(0, -1).map((l, i) => `<div class="flex items-center" style="width:${lg[i + 1][3] - l[3]}px;color:${l[2]}"><div class="w-[18px] h-2 rounded-full bg-current"></div><span style="margin-left:${l[4] - l[3] - 18}px;width:${l[5] - l[4]}px">${l[0]}</span><span>${l[1]}</span></div>`).join('');

// Section menu
$('sub').innerHTML = ['cpu', 'load', 'disk', 'ram', 'swap', 'network', 'processes', 'idlejitter', 'interrupts', 'softirqs', 'softnet', 'entropy', 'uptime', 'clock synchronization', 'ipc semaphores', 'ipc shared memory'].map(t => `<div>${t}</div>`).join('');
const cloud = '<path d="M5 16a4.500 4.500 0 0 1-1-8.800A5.500 5.500 0 0 1 14 4.500a3.800 3.800 0 0 1 3.500 4A3.900 3.900 0 0 1 17 16z"/>';
const ic = {
  bolt: '<path d="M7 1h6l-1.500 5.500H16L9.500 17l1.500-7H5.500z"/>',
  chip: '<path d="M6 1h9v16H6z"/><path d="M2.500 3H18.500M2.500 6H18.500M2.500 9H18.500M2.500 12H18.500M2.500 15H18.500" stroke="currentColor" stroke-width="1.300" stroke-dasharray="2.500 11"/>',
  disk: '<path d="M4.500 3h12L20 8.500H1zM3 9.500h15a2 2 0 0 1 2 2V14a2 2 0 0 1-2 2H3a2 2 0 0 1-2-2v-2.500a2 2 0 0 1 2-2z"/><path d="M12.500 12.700h2M16 12.700h2" stroke="#272b30" stroke-width="2"/>',
  cloud,
  tree: '<path d="M7.500 1h6v5h-6zM0 12h6v5H0zM7.500 12h6v5h-6zM15 12h6v5h-6z"/><path d="M10.500 6v6M3 12V8.700h15V12" fill="none" stroke="currentColor" stroke-width="1.300"/>',
  shield: '<path d="M10.500 1L18 4c0 6-2 10.500-7.500 13C5 14.500 3 10 3 4z"/><path d="M11 3.500V14.500C14 12.500 15.700 9.500 15.900 5.500z" fill="#272b30"/>',
  cogs: '<circle cx="7" cy="9" r="4.200" fill="none" stroke="currentColor" stroke-width="3.600"/><circle cx="7" cy="9" r="6.500" fill="none" stroke="currentColor" stroke-width="2" stroke-dasharray="3.400 3.400"/><g fill="none" stroke="currentColor"><circle cx="17" cy="4.500" r="2.200" stroke-width="1.700"/><circle cx="17" cy="13.500" r="2.200" stroke-width="1.700"/><circle cx="17" cy="4.500" r="3.300" stroke-dasharray="1.700 1.700"/><circle cx="17" cy="13.500" r="3.300" stroke-dasharray="1.700 1.700"/></g>',
  heart: '<path d="M10.500 17L3.500 9.500C1 6.500 3 2 6.500 2c2 0 3 1 4 2.500C11.500 3 12.500 2 14.500 2 18 2 20 6.500 17.500 9.500z"/><path d="M2 9h5l1.500-3 2.500 6 1.500-4 1 1.500H19" fill="none" stroke="#272b30" stroke-width="1.200"/>',
  group: '<circle cx="10.500" cy="4.500" r="3.300"/><path d="M5 16v-3c0-3 1.500-4 3-4h5c1.500 0 3 1 3 4v3z"/><circle cx="3.300" cy="5" r="2.100"/><circle cx="17.700" cy="5" r="2.100"/><path d="M0 12V10c0-1.500 1-2.200 2-2.200h3.500C4.500 9 4 10 4 12zM21 12V10c0-1.500-1-2.200-2-2.200h-3.500c1 1.200 1.500 2.200 1.500 4.200z"/>',
  user: '<circle cx="10.500" cy="5" r="4"/><path d="M3.500 17v-2c0-3 2-5 4-5h6c2 0 4 2 4 5v2z"/>'
};
$('menu').innerHTML = [['bolt', 'CPUs'], ['chip', 'Memory'], ['disk', 'Disks'], ['cloud', 'Networking Stack'], ['cloud', 'IPv4 Networking'], ['cloud', 'IPv6 Networking'], ['tree', 'Network Interfaces'], ['shield', 'Firewall (netfilter)'], ['cogs', 'systemd Services'], ['heart', 'Applications'], ['group', 'User Groups'], ['user', 'Users']]
  .map(([k, t]) => `<div class="h-[33px] flex items-center gap-[7px]"><svg width="21" height="18" fill="currentColor">${ic[k]}</svg><span>${t}</span></div>`).join('');

// Fit labels to their column widths through letter spacing
function fit() {
  document.querySelectorAll('[data-w]').forEach(e => {
    e.style.letterSpacing = '0px'; e.style.flexShrink = 0; e.style.width = 'auto';
    const w = +e.dataset.w, range = document.createRange();
    range.selectNodeContents(e);
    e.style.letterSpacing = ((w - range.getBoundingClientRect().width) / e.textContent.length).toFixed(3) + 'px';
    e.style.width = w + 'px';
  });
}
fit();
addEventListener('load', fit);
document.fonts.ready.then(fit);
[0, 60, 200, 500].forEach(t => setTimeout(fit, t));
</script>
</body>
</html>
